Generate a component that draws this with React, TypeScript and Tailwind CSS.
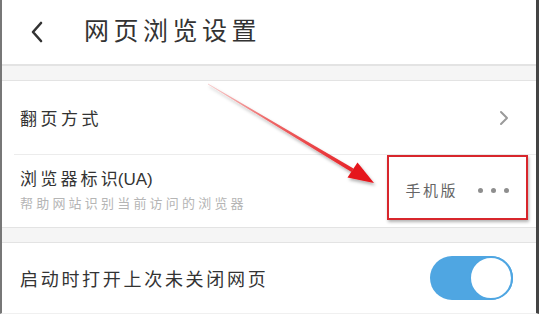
import React from "react";

const cjk = { fontFamily: '"Noto Sans CJK SC", "Liberation Sans", sans-serif' };

function Band() {
  return <div className="h-[16px] border-y border-[#e3e3e3] bg-[#f5f5f5]" />;
}

// 标注箭头，画面上的红色箭头
function Arrow() {
  return (
    <svg className="pointer-events-none absolute left-0 top-0" width="543" height="321" viewBox="0 0 543 321">
      <defs>
        <linearGradient id="arrowGrad" x1="208" y1="84" x2="374" y2="183" gradientUnits="userSpaceOnUse">
          <stop offset="0" stopColor="#f6d0d0" />
          <stop offset="0.35" stopColor="#ee6a6a" />
          <stop offset="1" stopColor="#e5141a" />
        </linearGradient>
        <filter id="arrowShadow" x="-10%" y="-10%" width="130%" height="130%">
          <feDropShadow dx="1.5" dy="2.5" stdDeviation="1.5" floodColor="#000" floodOpacity="0.3" />
        </filter>
      </defs>
      <g filter="url(#arrowShadow)">
        <polygon
          points="208,83.6 208,84.4 351.5,171.9 353.5,168.5"
          fill="url(#arrowGrad)"
        />
        <polygon points="374,183 347.5,177.5 357.5,162.5" fill="#e5141a" />
      </g>
    </svg>
  );
}

export default function App() {
  return (
    <div className="relative h-[321px] w-[543px] overflow-hidden bg-white" style={cjk}>
      <div className="h-[314px] w-[539px] border-l-2 border-r-[3px] border-l-[#777] border-r-[#444] border-b border-b-[#f0f0f0]">
        <div className="flex h-[65px] items-center border-b border-[#e3e3e3]">
          <svg className="ml-[28px]" width="14" height="22" viewBox="0 0 14 22">
            <polyline points="11,2 3,11 11,20" fill="none" stroke="#333" strokeWidth="2.6" strokeLinecap="round" strokeLinejoin="round" />
          </svg>
          <h1 className="ml-[40px] pb-[4px] text-[25px] tracking-[4.5px] text-[#333]">网页浏览设置</h1>
        </div>
        <Band />

        <div className="flex h-[73px] items-center justify-between pl-[18px] pr-[26px]">
          <span className="text-[17px] tracking-[3.5px] text-[#333]">翻页方式</span>
          <svg width="12" height="16" viewBox="0 0 12 16">
            <polyline points="3,2 9,8 3,14" fill="none" stroke="#9a9a9a" strokeWidth="2" strokeLinecap="round" strokeLinejoin="round" />
          </svg>
        </div>
        <div className="ml-[12px] h-px bg-[#ececec]" />

        <div className="flex h-[72px] items-center justify-between pl-[18px] pr-[27px]">
          <div className="flex flex-col pb-[4px]">
            <span className="text-[17px] leading-[24px] text-[#333]">
              <span className="tracking-[3.2px]">浏览器标</span>
              <span>识</span>
              <span style={{ fontFamily: '"Liberation Sans", sans-serif' }}>(UA)</span>
            </span>
            <span className="mt-[2px] text-[13px] leading-[18px] tracking-[3.2px] text-[#b5b5b5]">帮助网站识别当前访问的浏览器</span>
          </div>
          <div className="flex items-center pb-[2px]">
            <span className="text-[15px] tracking-[2.5px] text-[#666]">手机版</span>
            <div className="ml-[20px] flex gap-[8px]">
              <span className="h-[5px] w-[5px] rounded-full bg-[#8e8e8e]" />
              <span className="h-[5px] w-[5px] rounded-full bg-[#8e8e8e]" />
              <span className="h-[5px] w-[5px] rounded-full bg-[#8e8e8e]" />
            </div>
          </div>
        </div>
        <Band />

        <div className="flex h-[70px] items-center justify-between pl-[18px] pr-[23px]">
          <span className="text-[18px] tracking-[2.7px] text-[#333]">启动时打开上次未关闭网页</span>
          <div className="flex h-[44px] w-[83px] items-center justify-end rounded-full bg-[#4fa6e2]">
            <span className="h-[44px] w-[44px] rounded-full border-2 border-[#4fa6e2] bg-white" />
          </div>
        </div>
      </div>

      <div className="pointer-events-none absolute left-[387px] top-[155px] h-[65px] w-[141px] border-2 border-[#d8262c] shadow-[1px_2px_3px_rgba(0,0,0,0.3)]" />
      <Arrow />
    </div>
  );
}
